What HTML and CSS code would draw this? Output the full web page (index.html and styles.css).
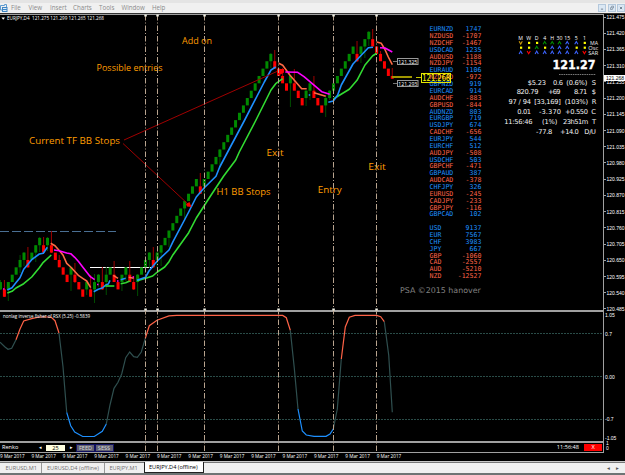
FILE: index.html
```html
<!DOCTYPE html>
<html lang="en">
  <head>
    <meta charset="UTF-8" />
    <meta name="viewport" content="width=device-width, initial-scale=1.0" />
    <title>EURJPY,D4 (offline)</title>
    <link rel="stylesheet" href="styles.css">
  </head>
  <body>
    <header class="top">
      <div class="title-strip"></div>
      <nav class="menubar">
        <svg class="app-icon" width="8" height="8" viewBox="0 0 8 8">
          <path d="M0.5 3V1.5H4.5V0.5H6.5V3M0.5 3V6H3" fill="none" stroke="#5d9bd0" />
          <rect x="2.5" y="3.5" width="4.5" height="4" fill="#dcecf8" stroke="#3f86c4" />
          <path d="M3 5.5H7" stroke="#3f86c4" />
        </svg>
        <span class="m-file">File</span>
        <span class="m-view">View</span>
        <span class="m-insert">Insert</span>
        <span class="m-charts">Charts</span>
        <span class="m-tools">Tools</span>
        <span class="m-window">Window</span>
        <span class="m-help">Help</span>
        <div class="win-buttons">
          <svg width="8" height="8" viewBox="0 0 8 8"><path d="M2.5 5.5H5.5" stroke="#567" /></svg>
          <svg width="8" height="8" viewBox="0 0 8 8"><path d="M3.5 3V1.5H6V4H5M2 3.5H4.5V6H2Z" fill="none" stroke="#678" stroke-width=".8" /></svg>
          <svg width="8" height="8" viewBox="0 0 8 8"><path d="M2.5 2.5L5.5 5.5M5.5 2.5L2.5 5.5" stroke="#567" /></svg>
        </div>
      </nav>
    </header>

    <main class="window">
      <div class="charts">
        <section class="pane price">
          <svg class="plot" width="603" height="295" viewBox="0 15 603 295">
            <path class="swing" d="M0 231.5H116" />
            <path class="level" d="M90 267.5H153" />
            <g id="candles"></g>

            <g class="band">
              <polyline class="blue" points="7.3,290 12,287.7 16.7,281.7 20,277.7 23.7,269.3 31.7,259.7 39.3,254 43.3,253.3 47.3,247.3" />
              <polyline class="green" points="7.3,293 12,291.3 16,288 23.7,283.7 31.7,277 39.3,267.7 43.3,262.3 51.3,255" />
              <polyline class="orange" points="50.7,243.3 55,245.7 59,250.3 63,255 66.7,263.3 70.7,267 78.7,275.7 82.7,278.3 86.7,281 90.7,287.7" />
              <polyline class="magenta" points="54,250 59,250.7 66.7,253 70.7,253.7 74.7,257.3 78.7,261.7 82.7,267 90.3,276.7 94.7,279.7" />
              <polyline class="blue" points="93.7,291.7 98.3,289.3 102.3,288 106.3,284.7 108.3,284 110,280.3" />
              <polyline class="green" points="105.3,286 114.3,286" />
              <polyline class="orange" points="113.3,275.3 118,278.3" />
              <polyline class="blue" points="120.7,279.7 125.7,278.3" />
              <polyline class="green" points="120.7,283.7 125.7,282.7 129.7,281" />
              <polyline class="orange" points="128.7,277.3 133.7,278.3" />
              <path class="magenta" d="M3 289H4.5M97 284.5H98.5M117 281H118.5M132.5 277H134" />
              <polyline class="green" points="137.3,280.7 145.7,278.3 152.7,276 157.3,272 164.7,267 169,261.7 173,254.7 188.7,232.7 196.3,218 210,196.7 223.7,176 235.7,160 239.3,152 256,120 271,90 275.7,83.7 282.7,78.7" />
              <polyline class="blue" points="137,280.2 145.5,277.3 149,271 153.3,265.7 157.3,261 169,250 173,241.7 188.7,212 196.3,197 204.3,187.7 216,176.3 219.7,167 244.7,120 264.3,82 271,70 275.7,67" />
              <polyline class="orange" points="278.7,63.3 282.7,65.3 290,75.3 301.7,88.7 306.7,88.7" />
              <polyline class="orange" points="314,92.7 325.7,96.3" />
              <path class="blue" d="M308.7 95H310.2" />
              <polyline class="magenta" points="285.3,72 297.7,72.3 304,76.7 321.7,91.7 329.7,94.3" />
              <polyline class="green" points="333.3,99 349.3,89.3 357,80.3 365,65 372.7,55.7 376.7,53.3" />
              <polyline class="blue" points="328.3,102.3 333.3,101 337.7,95 341.3,85 353,64 368.3,47.7 373,47.3" />
              <polyline class="orange" points="376.7,42 381.3,43.3 384.7,49 388.3,57 392.3,64.7" />
              <polyline class="magenta" points="380,47.7 385,48 392.3,52" />
            </g>

            <g class="arrows">
              <path d="M124 140L278 71M123 143.5L189 205" />
              <path class="head" d="M277 69H284V72.5L280.5 74.5L277 72ZM186 204L189.5 202L191.5 207L187 206.5Z" />
            </g>

            <path class="bid" d="M392 77H412" />
            <path class="bid-tick" d="M416 77.5H421" />
            <path class="tick" d="M393 61.5H397M393 83.5H397" />

            <text class="ohlc" x="7" y="20.2" textLength="97" lengthAdjust="spacingAndGlyphs">EURJPY,D4&#160; 121.275 121.299 121.265 121.268</text>
            <path d="M1.5 17.5H5L3.2 19.7Z" fill="#fff" />

            <g class="note">
              <text x="182" y="43.6" textLength="30" lengthAdjust="spacingAndGlyphs">Add on</text>
              <text x="96.5" y="71" textLength="66" lengthAdjust="spacingAndGlyphs">Possible entries</text>
              <text x="29" y="144" textLength="91" lengthAdjust="spacingAndGlyphs">Current TF BB Stops</text>
              <text x="216.5" y="195" textLength="54" lengthAdjust="spacingAndGlyphs">H1 BB Stops</text>
              <text x="266.5" y="156" textLength="17" lengthAdjust="spacingAndGlyphs">Exit</text>
              <text x="317.7" y="192.7" textLength="24" lengthAdjust="spacingAndGlyphs">Entry</text>
              <text x="368.3" y="170" textLength="17.5" lengthAdjust="spacingAndGlyphs">Exit</text>
            </g>

            <g id="trend"></g>
            <g class="trend-names">
              <text x="590" y="44.8" textLength="8" lengthAdjust="spacingAndGlyphs">MA</text>
              <text x="588.3" y="49.7" textLength="10" lengthAdjust="spacingAndGlyphs">Osc</text>
              <text x="588.3" y="54.6" textLength="10" lengthAdjust="spacingAndGlyphs">SAR</text>
            </g>

            <text class="quote" x="552.5" y="69.3" textLength="43" lengthAdjust="spacingAndGlyphs">121.27</text>
            <path class="dashes" d="M559 74.5H596" />
            <g class="info">
              <text x="527.8" y="84.8" textLength="18.2">$5.23</text>
              <text x="553" y="84.8" textLength="10">0.6</text>
              <text x="566.3" y="84.8" textLength="21">(0.6%)</text>
              <text x="591.7" y="84.8">S</text>
              <text x="516.7" y="94.4" textLength="21.7">820.79</text>
              <text x="548" y="94.4" textLength="12.5">+69</text>
              <text x="574" y="94.4" textLength="13.3">8.71</text>
              <text x="591.7" y="94.4">$</text>
              <text x="508.5" y="104.2" textLength="22.5">97 / 94</text>
              <text x="534.3" y="104.2" textLength="26.5">[33,169]</text>
              <text x="564.7" y="104.2" textLength="23.3">(103%)</text>
              <text x="591.7" y="104.2">R</text>
              <text x="517.3" y="113.9" textLength="13.7">0.01</text>
              <text x="539" y="113.9" textLength="22">-3.370</text>
              <text x="565" y="113.9" textLength="23">+0.550</text>
              <text x="591.3" y="113.9">C</text>
              <text x="504.3" y="123.8" textLength="28.2">11:56:46</text>
              <text x="542" y="123.8" textLength="15.3">(1%)</text>
              <text x="563" y="123.8" textLength="25.3">23h51m</text>
              <text x="592" y="123.8">T</text>
              <text x="536" y="133.5" textLength="16.3">-77.8</text>
              <text x="560" y="133.5" textLength="18.7">+14.0</text>
              <text x="584.3" y="133.5" textLength="11.7">D/U</text>
            </g>
          </svg>

          <div class="strength">
            <table id="pairs"></table>
            <table id="currencies"></table>
            <p class="credit">PSA ©2015 hanover</p>
          </div>

          <svg class="tags" width="603" height="295" viewBox="0 15 603 295">
            <rect x="397.5" y="58.5" width="20.5" height="6" />
            <rect x="397.5" y="80.5" width="20.5" height="6" />
            <text x="398.3" y="63.8" textLength="19" lengthAdjust="spacingAndGlyphs">121.325</text>
            <text x="398.3" y="85.8" textLength="19" lengthAdjust="spacingAndGlyphs">121.293</text>
            <rect class="last" x="421.5" y="73.5" width="29" height="9" />
            <text class="last-text" x="422.3" y="81" textLength="28" lengthAdjust="spacingAndGlyphs">121.268</text>
          </svg>
        </section>

        <section class="pane rsx">
          <svg width="603" height="129" viewBox="0 312 603 129">
            <path class="grid" d="M0 333.5H603M0 376.5H603M0 419.5H603" />
            <g class="curve">
              <path d="M0 342.3L5 347L8 349.3L11.7 348.3L16 339.7M59 333L63 366.7L66.7 412.3M106.3 424L110 405L114 388.3L118 382.3L121.7 374L125.7 357.7L129.7 352L133.7 356.7L137.3 357.3L141.3 352L145.3 338.3M290.3 330.3L294.3 368.3L298 409M333.3 429L337.3 409L341.3 359M384.3 321.7L388.7 355L392.3 412.3" />
              <path class="up" d="M16 339.7L20 329L23.7 321L31.7 318.7L39.3 317H47.3L51.3 317.3L55 320.7L59 333M145.3 338.3L149.3 325.7L157 320.3L169 315.9L176.7 315.4H282.7L286.3 317.7L290.3 330.3M341.3 359L345.3 327L349.3 317.3L355 315.4H376.7L380.7 316.7L384.3 321.7" />
              <path class="down" d="M66.7 412.3L70.7 425.7L74.7 432L82.7 436.5H94.3L102.3 431.3L106.3 424M298 409L302.3 431L306.3 435L314 436.3H326L330 434L333.3 429" />
            </g>
            <text class="ohlc" x="3" y="318" textLength="87" lengthAdjust="spacingAndGlyphs">nonlag inverse fisher of RSX (5.25) -0.5839</text>
          </svg>
        </section>

        <section class="renko">
          <span class="renko-name">Renko</span>
          <span class="arrow">◂</span>
          <span class="size">25</span>
          <span class="arrow">▸</span>
          <span class="btn">FEED</span>
          <span class="btn">SESS</span>
          <span class="clock">11:56:48</span>
          <span class="close">X</span>
        </section>

        <!-- session markers run through all the panes -->
        <svg class="markers" width="603" height="438" viewBox="0 14 603 438" id="markers"></svg>
      </div>

      <aside class="scales">
        <div class="scale price-scale" id="priceScale"></div>
        <div class="scale rsx-scale">
          <span>1.05</span>
          <span>0.7</span>
          <span>0.00</span>
          <span>-0.7</span>
          <span>-1.05</span>
        </div>
        <div class="scale renko-scale"><span>1</span><span>0</span></div>
        <div class="now">121.268</div>
      </aside>

      <div class="dates" id="dates"></div>
    </main>

    <footer class="tabs">
      <span class="tab t1">EURUSD,M1</span>
      <span class="tab t2">EURUSD,D4 (offline)</span>
      <span class="tab t3">EURJPY,M1</span>
      <span class="tab active">EURJPY,D4 (offline)</span>
      <span class="scroll">◂</span>
      <span class="scroll">▸</span>
    </footer>
    <div class="bottom"></div>

    <script src="chart.js"></script>
  </body>
</html>
```
FILE: styles.css
```css
* {
  margin: 0;
  padding: 0;
  box-sizing: border-box;
}

body {
  width: 625px;
  height: 475px;
  overflow: hidden;
  background-color: #000;
  font-family: "Open Sans", "Noto Sans", sans-serif;
  color: #fff;
}

svg {
  display: block;
}

/* menu */
.top {
  height: 13px;
  background-color: #f0f0f0;
}

.title-strip {
  height: 3px;
  background-color: #e4e4e4;
}

.menubar {
  display: flex;
  align-items: center;
  height: 9px;
  font-size: 6.2px;
  line-height: 9px;
  color: #8a8a8a;
}

.menubar span {
  white-space: nowrap;
}

.app-icon { margin-right: 3px; }
.m-file { width: 17.5px; }
.m-view { width: 21.5px; }
.m-insert { width: 23px; }
.m-charts { width: 26px; }
.m-tools { width: 22.5px; }
.m-window { width: 30.5px; }

.win-buttons {
  display: flex;
  gap: 1.5px;
  margin-left: auto;
}

.win-buttons svg {
  background-color: #dbe8f4;
  border: 1px solid #b4c8dc;
}

/* chart window */
.window {
  display: grid;
  grid-template-columns: 604px 1fr;
  grid-template-rows: 439px 9px;
  height: 449px;
  border-top: 1px solid #333;
}

.charts {
  position: relative;
  border-top: 1px solid #a0a0a0;
  border-right: 1px solid #a0a0a0;
  border-bottom: 1px solid #a0a0a0;
}

.pane {
  border-bottom: 2px solid #a0a0a0;
}

.price {
  position: relative;
  height: 297px;
}

.rsx {
  height: 131px;
}

.tags,
.markers {
  position: absolute;
  left: 0;
  top: 0;
}

.markers {
  top: -1px;
}

.markers path {
  stroke: #b9a48f;
  stroke-width: 1;
  stroke-dasharray: 5.5 2 1 2;
}

.markers rect {
  fill: #f4f4e8;
}

.candle-up { fill: #008a00; }
.candle-down { fill: #ff0000; }
.wick-up { fill: #004c00; }
.wick-down { fill: #a00000; }

.swing {
  stroke: #4a6f93;
  stroke-dasharray: 9 3;
}

.level {
  stroke: #fff;
}

.band {
  fill: none;
  stroke-width: 1.6;
  stroke-linejoin: round;
}

.blue { stroke: #1e90ff; }
.green { stroke: #32dc32; }
.orange { stroke: #ff6a45; }
.magenta { stroke: #ff00ff; }

.arrows {
  stroke: #a00000;
  stroke-width: 1;
}

.arrows .head {
  fill: #ff0000;
  stroke: none;
}

.bid {
  stroke: #a09600;
  stroke-width: 2;
}

.bid-tick {
  stroke: #c8c800;
}

.tick {
  stroke: #777;
}

.ohlc {
  font-size: 5.2px;
  fill: #fff;
}

.note {
  font-family: "Comic Sans MS", "Open Sans", sans-serif;
  font-size: 9.2px;
  fill: #ff9d00;
}

.trend-head {
  font-size: 5.2px;
  fill: #fff;
  text-anchor: middle;
}

.mark {
  fill: none;
  stroke-width: 1.1;
}

.trend-names {
  font-size: 5px;
  fill: #eee;
}

.quote {
  font-family: "DejaVu Sans", sans-serif;
  font-size: 12px;
  font-weight: bold;
  fill: #fff;
  stroke: #fff;
  stroke-width: .35;
}

.dashes {
  stroke: #777;
  stroke-dasharray: 1.6 .7;
}

.info {
  font-family: "DejaVu Sans", sans-serif;
  font-size: 6.7px;
  fill: #f4f4f4;
}

/* currency strength list */
.strength {
  position: absolute;
  left: 400px;
  top: 11.2px;
  width: 81px;
}

.strength table {
  width: 52px;
  margin-left: 29.5px;
  border-collapse: collapse;
  font-family: "DejaVu Sans Mono", monospace;
  font-size: 6.6px;
  line-height: 6.87px;
}

.strength tr {
  display: flex;
  justify-content: space-between;
  height: 6.87px;
}

.strength td {
  display: block;
}

.strength #currencies {
  margin-top: 6.87px;
}

.pos { color: #1e90ff; }
.neg { color: #ff6347; }

.credit {
  margin-top: 5px;
  font-family: "DejaVu Sans", sans-serif;
  font-size: 7.9px;
  line-height: 11px;
  white-space: nowrap;
  color: #808080;
}

.tags rect {
  fill: #000;
  stroke: #999;
}

.tags text {
  font-size: 5.8px;
  fill: #fff;
}

.tags .last {
  fill: none;
  stroke: #e6e600;
}

.tags .last-text {
  font-family: "DejaVu Sans", sans-serif;
  font-size: 8px;
  fill: #ffff00;
}

/* indicator */
.grid {
  stroke: #2a4c48;
  stroke-dasharray: 2 1;
}

.curve {
  fill: none;
  stroke: #2f4f4f;
  stroke-width: 1.2;
}

.curve .up { stroke: #ff6347; }
.curve .down { stroke: #1e90ff; }

/* renko bar */
.renko {
  display: flex;
  align-items: center;
  height: 9px;
  padding-left: 2px;
  font-size: 5.6px;
  line-height: 7px;
}

.renko-name { width: 37px; }

.arrow {
  width: 7px;
  font-family: "DejaVu Sans", sans-serif;
  font-size: 5px;
}

.size {
  width: 19px;
  height: 6px;
  margin-right: 5px;
  line-height: 6px;
  text-align: center;
  background-color: #ffffe0;
  color: #000;
}

.btn {
  width: 17px;
  height: 6px;
  margin-right: 1.5px;
  line-height: 6px;
  text-align: center;
  background-color: #606070;
  outline: 1px solid #101060;
  color: #d8d8d8;
}

.clock {
  margin-left: auto;
  margin-right: 5px;
}

.close {
  width: 18px;
  height: 6.5px;
  margin-right: 1px;
  line-height: 6.5px;
  text-align: center;
  background-color: #ff0000;
}

/* scales */
.scales {
  position: relative;
  font-family: "Liberation Sans", sans-serif;
  font-size: 5px;
  line-height: 6px;
}

.scale {
  display: flex;
  flex-direction: column;
  justify-content: space-between;
}

.price-scale {
  height: 298px;
}

.price-scale span::before {
  content: "";
  display: inline-block;
  width: 1.5px;
  height: 1px;
  margin-right: 1px;
  vertical-align: 1.5px;
  background-color: #a0a0a0;
}

.rsx-scale {
  height: 129px;
  padding-left: 1px;
}

.rsx-scale span:nth-child(2) { margin-bottom: 25px; margin-top: 1px; }
.rsx-scale span:nth-child(4) { margin-top: 25px; margin-bottom: 1px; }

.renko-scale {
  height: 9px;
  padding-left: 2px;
  line-height: 4px;
}

.now {
  position: absolute;
  left: 0;
  top: 61px;
  width: 21px;
  height: 6px;
  padding-left: 2px;
  line-height: 6px;
  background-color: #fff;
  color: #000;
}

.dates {
  grid-column: 1 / 3;
  display: flex;
  border-bottom: 1px solid #c8c8c8;
  font-size: 4.7px;
  line-height: 7px;
}

.dates span {
  flex: 0 0 31.4px;
  white-space: nowrap;
}

/* tabs */
.tabs {
  display: flex;
  height: 11px;
  border-top: 1px solid #777;
  background-color: #f0f0f0;
  font-size: 5.6px;
  line-height: 10px;
  color: #707070;
}

.tab {
  white-space: nowrap;
}

.t1 { width: 42px; padding-left: 5.5px; border-right: 1px solid #999; }
.t2 { width: 63px; padding-left: 5px; border-right: 1px solid #999; }
.t3 { width: 39px; padding-left: 4.5px; }

.active {
  width: 60px;
  margin-top: -1px;
  padding-left: 4px;
  background-color: #fff;
  border: 1px solid #222;
  border-top: none;
  line-height: 11px;
  color: #000;
}

.scroll {
  width: 9px;
  font-family: "DejaVu Sans", sans-serif;
  color: #555;
}

.active + .scroll {
  margin-left: auto;
}

.bottom {
  height: 2px;
  background-color: #6e7474;
}
```
FILE: chart.js
```js
var SVG = "http://www.w3.org/2000/svg";

function add(parent, name, attrs, text) {
  var el = document.createElementNS(SVG, name);
  for (var key in attrs) {
    el.setAttribute(key, attrs[key]);
  }
  if (text) {
    el.textContent = text;
  }
  parent.appendChild(el);
}

// renko bricks: u = up, d = down, number = brick level
var bricks =
  "u0 d-1 u0 u1 u2 u3 u4 d3 u4 u5 u6 d5 u6 d5 d4 d3 d2 d1 u2 d1 d0 d-1 u0 d-1 u0 u1 d0 u1 u2 d1 d0 u1 u2 d1 d0 " +
  "u1 u2 u3 u4 d3 u4 u5 u6 u7 u8 u9 u10 u11 u12 u13 u14 d13 u14 u15 u16 u17 u18 u19 u20 u21 u22 u23 u24 u25 u26 u27 " +
  "u28 u29 u30 u31 d30 d29 d28 d27 u28 d27 d26 d25 u26 u27 d26 d25 d24 u25 u26 u27 u28 u29 u30 u31 u32 d31 u32 u33 " +
  "u34 d33 d32 d31 d30 d29 d28";

// wicks: [brick index, top y, bottom y]
var wicks = [
  [0, 280, 290], [1, 280, 297], [2, 282, 301], [5, 255, 273], [6, 252, 266], [7, 247, 268], [9, 245, 262],
  [10, 237, 252], [11, 237, 253], [12, 237, 251], [13, 231, 253], [15, 255, 265], [18, 267, 291], [19, 263, 283],
  [22, 281, 295], [23, 275, 297], [24, 274, 303], [25, 274, 287], [26, 267, 290], [27, 267, 295], [29, 261, 282],
  [31, 275, 291], [32, 267, 281], [33, 261, 282], [34, 276, 290], [35, 274, 296], [38, 252, 268], [39, 247, 268],
  [40, 252, 268], [41, 245, 266], [43, 231, 247], [47, 201, 221], [51, 173, 194], [52, 179, 195], [56, 149, 168],
  [69, 53, 68], [70, 50, 68], [72, 68, 82], [74, 75, 107], [75, 69, 90], [78, 90, 106], [79, 82, 100],
  [80, 76, 98], [83, 95, 117], [84, 90, 100], [91, 41, 62], [92, 46, 63], [93, 39, 58], [94, 31, 46],
  [95, 29, 46], [97, 51, 61], [100, 68, 79]
];

var candles = document.getElementById("candles");
var list = bricks.split(" ");

function brickX(i) {
  return 4.4 + 3.918 * (i - 1);
}

wicks.forEach(function (w) {
  var cls = list[w[0]][0] == "u" ? "wick-up" : "wick-down";
  add(candles, "rect", { class: cls, x: brickX(w[0]) - 0.5, y: w[1], width: 1, height: w[2] - w[1] });
});

list.forEach(function (b, i) {
  var level = Number(b.slice(1));
  var cls = b[0] == "u" ? "candle-up" : "candle-down";
  var height = i == list.length - 1 ? 2.8 : 7.36;
  add(candles, "rect", { class: cls, x: brickX(i) - 1.5, y: 282.04 - 7.36 * level, width: 3, height: height });
});

// trend table: y/g/b/r colour, s = square, u = up, d = down
var heads = ["M", "W", "D", "4", "H", "30", "15", "5", "1"];
var headX = [520.7, 528.7, 536.7, 544.7, 552.2, 559.5, 567.2, 576.3, 584.4];
var trend = [
  ["od", "ys", "ys", "gu", "gu", "gu", "bu", "bu", "ys"],
  ["ys", "ys", "gu", "ys", "bu", "bu", "bu", "ys", "ys"],
  ["bu", "rd", "bu", "bu", "bu", "bu", "bu", "bu", "rd"]
];
var colors = { y: "#ffff00", o: "#c8960a", g: "#008c00", b: "#3c64ff", r: "#ff0000" };
var trendBox = document.getElementById("trend");

heads.forEach(function (h, i) {
  add(trendBox, "text", { class: "trend-head", x: headX[i], y: 39.8 }, h);
});
trend.forEach(function (row, r) {
  var y = 42.8 + r * 4.8;
  row.forEach(function (cell, i) {
    var x = headX[i];
    var color = colors[cell[0]];
    if (cell[1] == "s") {
      add(trendBox, "rect", { x: x - 0.7, y: y - 1, width: 2.2, height: 2.2, fill: color });
    } else {
      var s = cell[1] == "u" ? 1 : -1;
      var d = "M" + (x - 1.6) + " " + (y + 1.5 * s) + "L" + x + " " + (y - 1.3 * s) + "L" + (x + 1.6) + " " + (y + 1.5 * s);
      add(trendBox, "path", { class: "mark", d: d, stroke: color });
    }
  });
});

function fillTable(id, rows) {
  document.getElementById(id).innerHTML = rows.map(function (row) {
    var cls = row[1] < 0 ? "neg" : "pos";
    return '<tr class="' + cls + '"><td>' + row[0] + "</td><td>" + row[1] + "</td></tr>";
  }).join("");
}

fillTable("pairs", [
  ["EURNZD", 1747], ["NZDUSD", -1707], ["NZDCHF", -1467], ["USDCAD", 1235], ["AUDUSD", -1188], ["NZDJPY", -1154],
  ["EURAUD", 1106], ["NZDCAD", -972], ["GBPNZD", 919], ["EURCAD", 914], ["AUDCHF", -883], ["GBPUSD", -844],
  ["AUDNZD", 803], ["EURGBP", 719], ["USDJPY", 674], ["CADCHF", -656], ["EURJPY", 544], ["EURCHF", 512],
  ["AUDJPY", -508], ["USDCHF", 503], ["GBPCHF", -471], ["GBPAUD", 387], ["AUDCAD", -378], ["CHFJPY", 326],
  ["EURUSD", -245], ["CADJPY", -233], ["GBPJPY", -116], ["GBPCAD", 102]
]);
fillTable("currencies", [
  ["USD", 9137], ["EUR", 7567], ["CHF", 3983], ["JPY", 667],
  ["GBP", -1060], ["CAD", -2557], ["AUD", -5210], ["NZD", -12527]
]);

var scale = "";
for (var i = 0; i < 19; i++) {
  scale += "<span>" + (121.475 - i * 0.055).toFixed(3) + "</span>";
}
document.getElementById("priceScale").innerHTML = scale;

var dates = "";
for (var i = 0; i < 13; i++) {
  dates += "<span>9 Mar 2017</span>";
}
document.getElementById("dates").innerHTML = dates;

var markers = document.getElementById("markers");
[145.5, 157.5, 204.5, 278.5, 333.5, 376.5].forEach(function (x) {
  add(markers, "path", { d: "M" + x + " 15V452" });
  add(markers, "rect", { x: x - 1.2, y: 14.5, width: 2.5, height: 2 });
  add(markers, "rect", { x: x - 1.2, y: 308.5, width: 2.5, height: 2 });
});
```
